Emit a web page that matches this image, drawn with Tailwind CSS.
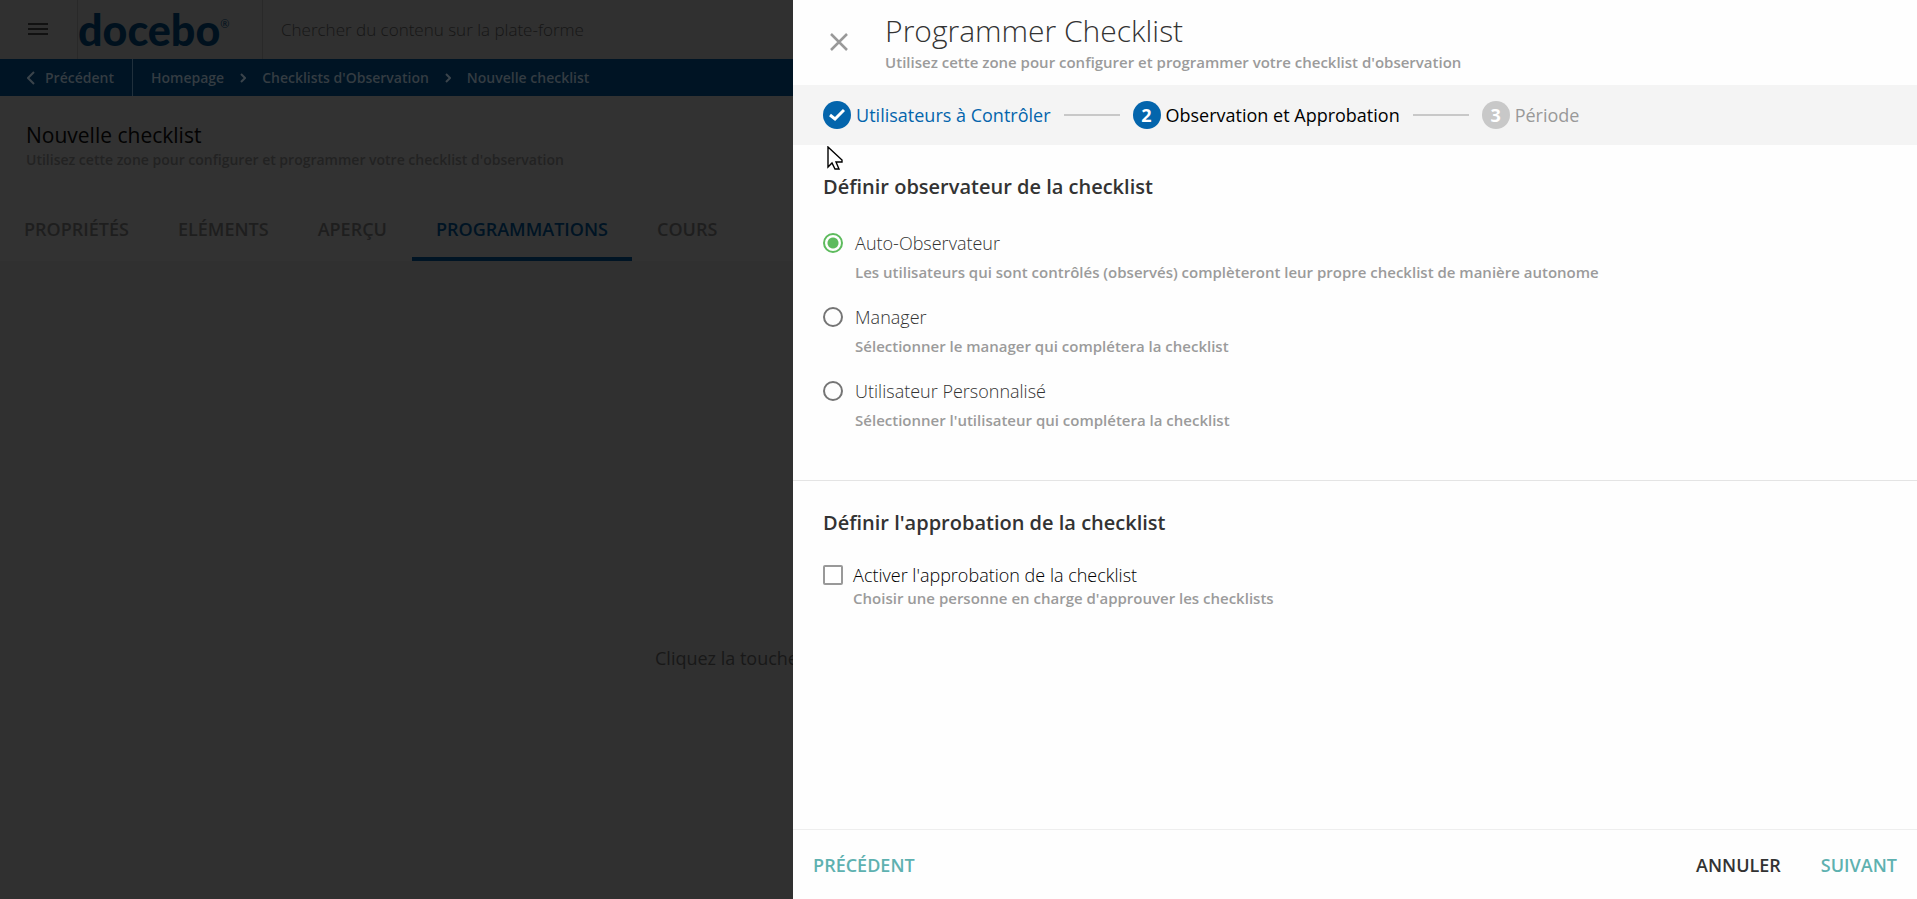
<!DOCTYPE html>
<html lang="fr">
<head>
<meta charset="utf-8">
<title>Programmer Checklist</title>
<script src="https://cdn.jsdelivr.net/npm/@tailwindcss/browser@4"></script>
</head>
<body class="flex min-h-screen bg-white font-['Open_Sans','Noto_Sans',sans-serif] text-[#333333]">

<!-- Dimmed page -->
<div class="flex min-w-0 flex-1 flex-col overflow-hidden bg-[#303030] text-[#1e1e1e]">
  <header class="flex h-[59px] shrink-0 items-stretch">
    <button type="button" aria-label="Menu" class="flex w-[77px] items-center pl-7">
      <svg class="h-5 w-5" viewBox="0 0 20 20" fill="none" stroke="#111111" stroke-width="2"><path d="M0 4h20M0 9h20M0 14h20"/></svg>
    </button>
    <a href="#" class="flex w-[186px] items-center border-x border-[#292929] text-[#00111e]">
      <span class="font-[Lato,sans-serif] text-[43px] leading-none font-black">docebo</span><sup class="text-[11px]">®</sup>
    </a>
    <input type="search" aria-label="Recherche" placeholder="Chercher du contenu sur la plate-forme" class="min-w-0 flex-1 bg-transparent pl-[18px] text-[17px] font-light outline-none placeholder:text-[#161616]">
  </header>

  <nav aria-label="Fil d'Ariane" class="flex h-[37px] shrink-0 items-center bg-[#001424] text-sm font-semibold text-[#343c42]">
    <a href="#" class="flex h-full w-[133px] items-center gap-2.5 border-r border-[#20303c] pl-[27px]">
      <svg class="h-3.5 w-2" viewBox="0 0 8 14" fill="none" stroke="#3a444b" stroke-width="2"><path d="M7 1 1 7l6 6"/></svg>Précédent
    </a>
    <a href="#" class="ml-[18px]">Homepage</a>
    <svg class="mx-4 h-2.5 w-1.5" viewBox="0 0 6 10" fill="none" stroke="#3a444b" stroke-width="2"><path d="m1 1 4 4-4 4"/></svg>
    <a href="#">Checklists d'Observation</a>
    <svg class="mx-4 h-2.5 w-1.5" viewBox="0 0 6 10" fill="none" stroke="#3a444b" stroke-width="2"><path d="m1 1 4 4-4 4"/></svg>
    <span>Nouvelle checklist</span>
  </nav>

  <div class="shrink-0 bg-[#323232] pt-6">
    <h1 class="pl-[26px] text-[21px] leading-[30px] text-[#030303]">Nouvelle checklist</h1>
    <p class="pl-[26px] text-sm leading-5 font-semibold whitespace-nowrap text-[#222222]">Utilisez cette zone pour configurer et programmer votre checklist d'observation</p>
    <div class="flex gap-px pt-[27px] text-lg font-semibold">
      <button type="button" class="border-b-4 border-transparent px-6 pt-5 pb-4 leading-6">PROPRIÉTÉS</button>
      <button type="button" class="border-b-4 border-transparent px-6 pt-5 pb-4 leading-6">ELÉMENTS</button>
      <button type="button" class="border-b-4 border-transparent px-6 pt-5 pb-4 leading-6">APERÇU</button>
      <button type="button" class="border-b-4 border-[#001424] px-6 pt-5 pb-4 leading-6 text-[#001424]">PROGRAMMATIONS</button>
      <button type="button" class="border-b-4 border-transparent px-6 pt-5 pb-4 leading-6">COURS</button>
    </div>
  </div>

  <main class="flex flex-1 items-center">
    <p class="pt-[156px] pl-[655px] text-lg whitespace-nowrap text-[#181818]">Cliquez la touche</p>
  </main>
</div>

<!-- Scheduling panel -->
<aside class="relative flex w-[58.63%] flex-col bg-[#fefefe]">
  <header class="flex h-[85px] shrink-0 items-center pb-0.5">
    <button type="button" aria-label="Fermer" class="w-[92px] pl-[37px]">
      <svg class="h-[18px] w-[18px]" viewBox="0 0 18 18" fill="none" stroke="#999999" stroke-width="2.5"><path d="m1 1 16 16M17 1 1 17"/></svg>
    </button>
    <div>
      <h2 class="text-[30px] leading-10 font-light">Programmer Checklist</h2>
      <p class="text-[15px] leading-[22px] font-semibold text-[#9b9b9b]">Utilisez cette zone pour configurer et programmer votre checklist d'observation</p>
    </div>
  </header>

  <ol class="flex h-[60px] shrink-0 items-center bg-[#f4f4f4] pl-[30px] text-lg font-medium">
    <li class="flex items-center gap-[5px] text-[#0465ac]">
      <span class="flex h-7 w-7 items-center justify-center rounded-full bg-[#0465ac]"><svg class="h-4 w-4" viewBox="0 0 16 16" fill="none" stroke="white" stroke-width="3"><path d="m1 8 5 4 9-9"/></svg></span>Utilisateurs à Contrôler
    </li>
    <li aria-hidden="true" class="mx-[13px] h-0.5 w-14 bg-[#c8c8c8]"></li>
    <li class="flex items-center gap-[5px] text-black" aria-current="step">
      <span class="flex h-7 w-7 items-center justify-center rounded-full bg-[#0465ac] font-bold text-white">2</span>Observation et Approbation
    </li>
    <li aria-hidden="true" class="mx-[13px] h-0.5 w-14 bg-[#c8c8c8]"></li>
    <li class="flex items-center gap-[5px] text-[#999999]">
      <span class="flex h-7 w-7 items-center justify-center rounded-full bg-[#c8c8c8] font-bold text-white">3</span>Période
    </li>
  </ol>

  <!-- Pointer -->
  <svg class="absolute top-[146px] left-[34px] h-6 w-4" viewBox="0 0 16 24" fill="white" stroke="black" stroke-width="1.4"><path d="M1 1v20l4-4 3 6h4l-3-7h6v-2z"/></svg>

  <section class="border-b border-[#e4e4e4] pt-7 pl-[30px]">
    <h3 class="text-xl leading-7 font-semibold">Définir observateur de la checklist</h3>
    <div class="mt-[26px] grid gap-4 pb-[47px]">
      <div class="grid grid-cols-[20px_1fr] items-center gap-x-3">
        <input id="o1" name="o" type="radio" checked class="h-5 w-5 appearance-none rounded-full border-2 border-[#5dbb5d] bg-white bg-radial from-[#5dbb5d] from-[5px] to-white to-[6px]">
        <label for="o1" class="text-lg leading-8 font-light">Auto-Observateur</label>
        <p class="col-start-2 text-[15px] leading-[26px] font-semibold text-[#9b9b9b]">Les utilisateurs qui sont contrôlés (observés) complèteront leur propre checklist de manière autonome</p>
      </div>
      <div class="grid grid-cols-[20px_1fr] items-center gap-x-3">
        <input id="o2" name="o" type="radio" class="h-5 w-5 appearance-none rounded-full border-2 border-[#757575]">
        <label for="o2" class="text-lg leading-8 font-light">Manager</label>
        <p class="col-start-2 text-[15px] leading-[26px] font-semibold text-[#9b9b9b]">Sélectionner le manager qui complétera la checklist</p>
      </div>
      <div class="grid grid-cols-[20px_1fr] items-center gap-x-3">
        <input id="o3" name="o" type="radio" class="h-5 w-5 appearance-none rounded-full border-2 border-[#757575]">
        <label for="o3" class="text-lg leading-8 font-light">Utilisateur Personnalisé</label>
        <p class="col-start-2 text-[15px] leading-[26px] font-semibold text-[#9b9b9b]">Sélectionner l'utilisateur qui complétera la checklist</p>
      </div>
    </div>
  </section>

  <section class="flex-1 pt-7 pl-[30px]">
    <h3 class="text-xl leading-7 font-semibold">Définir l'approbation de la checklist</h3>
    <div class="mt-[26px] grid grid-cols-[20px_1fr] items-center gap-x-2.5">
      <input id="a1" type="checkbox" class="h-5 w-5 appearance-none rounded-xs border-2 border-[#999999] bg-white">
      <label for="a1" class="text-lg leading-6 font-light text-black">Activer l'approbation de la checklist</label>
      <p class="col-start-2 text-[15px] leading-[22px] font-semibold text-[#9b9b9b]">Choisir une personne en charge d'approuver les checklists</p>
    </div>
  </section>

  <footer class="flex h-[70px] shrink-0 items-center gap-10 border-t border-[#eeeeee] px-5 text-lg font-semibold">
    <button type="button" class="mr-auto text-[#5eb1b0]">PRÉCÉDENT</button>
    <button type="button">ANNULER</button>
    <button type="button" class="text-[#5eb1b0]">SUIVANT</button>
  </footer>
</aside>
</body>
</html>
